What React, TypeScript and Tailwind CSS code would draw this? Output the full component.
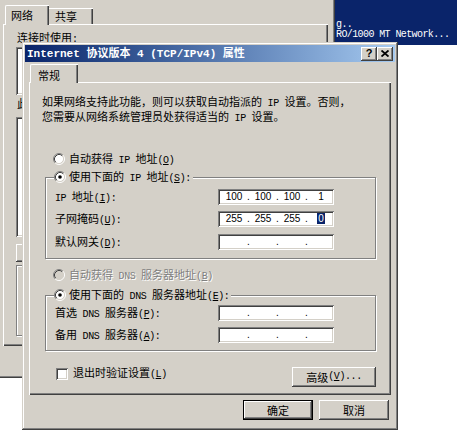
import React from 'react';

// classic win 2000/2003 bevels
const RAISED = 'shadow-[inset_-1px_-1px_#404040,inset_1px_1px_#ffffff,inset_-2px_-2px_#808080,inset_2px_2px_#d4d0c8]';
const SUNKEN = 'shadow-[inset_1px_1px_#808080,inset_-1px_-1px_#ffffff,inset_2px_2px_#404040,inset_-2px_-2px_#d4d0c8]';
const WINDOW = 'shadow-[inset_-1px_-1px_#404040,inset_1px_1px_#d4d0c8,inset_-2px_-2px_#808080,inset_2px_2px_#ffffff]';
const PANEL = 'shadow-[inset_1px_1px_#ffffff,inset_-1px_-1px_#404040,inset_-2px_-2px_#808080]';
const FRAME = 'border border-[#808080] shadow-[inset_1px_1px_#ffffff,1px_1px_#ffffff]';

const CJK = /([\u2E80-\u9FFF\u3000-\u303F\uFF00-\uFFEF]+)/;
const LATIN = "font-['Liberation_Mono'] text-[10px] tracking-[-0.4px]";

const Mn = ({ s }: { s: string }) => (
    <>{s.split(/&(.)/).map((p, i) => (i % 2 ? <u key={i}>{p}</u> : p))}</>
);

// splits a label into CJK runs and half-width runs, like SimSun would draw it
const T = ({ s, latin = LATIN }: { s: string; latin?: string }) => (
    <>
        {s.split(CJK).filter(Boolean).map((p, i) =>
            CJK.test(p)
                ? <span key={i} className="font-['Noto_Sans_CJK_SC']">{p}</span>
                : <span key={i} className={latin}><Mn s={p} /></span>
        )}
    </>
);

const Radio = ({ on = false, disabled = false }: { on?: boolean; disabled?: boolean }) => (
    <svg width="12" height="12" viewBox="0 0 12 12" className="shrink-0">
        <circle cx="6" cy="6" r="4.5" fill={disabled ? '#d4d0c8' : '#ffffff'} />
        <path d="M2.11 9.89A5.5 5.5 0 0 1 9.89 2.11" fill="none" stroke="#808080" />
        <path d="M9.89 2.11A5.5 5.5 0 0 1 2.11 9.89" fill="none" stroke="#ffffff" />
        <path d="M2.82 9.18A4.5 4.5 0 0 1 9.18 2.82" fill="none" stroke="#404040" />
        <path d="M9.18 2.82A4.5 4.5 0 0 1 2.82 9.18" fill="none" stroke="#d4d0c8" />
        {on && <circle cx="6" cy="6" r="1.8" fill="#000000" />}
    </svg>
);

const IpBox = ({ v = ['', '', '', ''], sel = -1 }: { v?: string[]; sel?: number }) => (
    <div className={`w-[116px] h-[16px] bg-white ${SUNKEN} flex items-center pl-[4px] font-['Liberation_Sans'] text-[10px] leading-[12px]`}>
        {v.map((x, i) => (
            <React.Fragment key={i}>
                {i > 0 && <span className="w-[5px] text-center">.</span>}
                <span className="w-[24px] text-center">
                    {i === sel ? <span className="bg-[#0a246a] text-white px-px">{x}</span> : x}
                </span>
            </React.Fragment>
        ))}
    </div>
);

const Row = ({ label, children }: { label: string; children: React.ReactNode }) => (
    <div className="flex items-center h-[16px]">
        <div className="w-[163px] whitespace-pre leading-[12px]"><T s={label} /></div>
        {children}
    </div>
);

const Btn = ({ label, def = false, w }: { label: string; def?: boolean; w: string }) => (
    <div className={`${w} h-[20px] flex items-center justify-center whitespace-pre leading-[12px] ${def ? 'border border-black ' + RAISED : RAISED}`}>
        <T s={label} />
    </div>
);

const Background = () => (
    <>
        <div className="absolute left-[335px] top-0 w-[122px] h-[45px] bg-[#0a246a] text-white font-['Liberation_Mono'] text-[10px] tracking-[-0.6px] leading-[10px] pl-[1px] pt-[20px] whitespace-pre">
            <div>g..</div>
            <div>RO/1000 MT Network...</div>
        </div>
        <div className="absolute left-0 top-0 w-[335px] h-[378px] bg-[#d4d0c8] pl-[3px] pt-[5px] shadow-[inset_-1px_-1px_#404040,inset_-2px_-2px_#808080]">
            <div className="flex items-end h-[19px] pl-[2px] relative z-10">
                <div className="w-[44px] h-[20px] -mb-px bg-[#d4d0c8] border-l border-t border-white rounded-tl-[2px] shadow-[inset_-1px_0_#404040,inset_-2px_0_#808080] pl-[5px] pt-[3px] leading-[12px]">
                    <T s="网络" />
                </div>
                <div className="w-[44px] h-[16px] bg-[#d4d0c8] border-t border-white shadow-[inset_-1px_0_#404040,inset_-2px_0_#808080] pl-[6px] pt-[1px] leading-[12px]">
                    <T s="共享" />
                </div>
            </div>
            <div className={`w-[325px] h-[322px] ${PANEL} pl-[13px] pt-[7px]`}>
                <div className="h-[12px] leading-[12px] pl-px whitespace-pre"><T s="连接时使用:" /></div>
                <div className={`mt-[4px] w-[300px] h-[48px] bg-white ${SUNKEN}`} />
                {/* only the first glyph of this label peeks out from under the dialog */}
                <div className="mt-[2px] h-[12px] leading-[12px] pl-px"><T s="此" /></div>
                <div className={`mt-[8px] w-[300px] h-[120px] bg-white ${SUNKEN}`} />
                <div className={`mt-[7px] w-[70px] h-[18px] ${RAISED}`} />
                <div className={`mt-[3px] w-[300px] h-[71px] ${FRAME}`} />
            </div>
        </div>
    </>
);

export default function App() {
    return (
        <div className="relative w-[457px] h-[437px] overflow-hidden bg-white text-black text-[11px] font-['Noto_Sans_CJK_SC',sans-serif]">
            <Background />

            <div className={`absolute left-[22px] top-[42px] w-[376px] h-[388px] bg-[#d4d0c8] p-[3px] flex flex-col ${WINDOW}`}>
                {/* title bar */}
                <div className="h-[17px] flex items-center pl-[2px] pr-[2px] bg-linear-to-r from-[#0a246a] to-[#a6caf0]">
                    <div className="flex-1 text-white font-bold whitespace-pre leading-[13px]">
                        <T s="Internet 协议版本 4 (TCP/IPv4) 属性" latin="font-['Liberation_Mono'] text-[11px] font-bold" />
                    </div>
                    <div className={`w-[16px] h-[14px] bg-[#d4d0c8] ${RAISED} flex items-center justify-center font-['Liberation_Sans'] font-bold text-[11px] leading-[11px]`}>?</div>
                    <div className={`w-[16px] h-[14px] bg-[#d4d0c8] ${RAISED} flex items-center justify-center`}>
                        <svg width="8" height="7" viewBox="0 0 8 7">
                            <path d="M0.5 0.5L7.5 6.5M7.5 0.5L0.5 6.5" stroke="#000" strokeWidth="1.8" />
                        </svg>
                    </div>
                </div>

                <div className="flex-1 flex flex-col px-[4px] pt-[2px]">
                    <div className="flex items-end h-[18px] pl-px relative z-10">
                        <div className="w-[48px] h-[19px] -mb-px bg-[#d4d0c8] border-l border-t border-white rounded-tl-[2px] shadow-[inset_-1px_0_#404040,inset_-2px_0_#808080] pl-[7px] pt-[4px] leading-[12px]">
                            <T s="常规" />
                        </div>
                    </div>

                    <div className={`h-[313px] ${PANEL} flex flex-col`}>
                        <div className="pl-[13px] pt-[13px] leading-[13px] whitespace-pre">
                            <div><T s="如果网络支持此功能，则可以获取自动指派的 IP 设置。否则，" /></div>
                            <div><T s="您需要从网络系统管理员处获得适当的 IP 设置。" /></div>
                        </div>

                        <div className="mt-[27px] pl-[24px] h-[14px] flex items-center gap-[4px] whitespace-pre leading-[12px]">
                            <Radio />
                            <span><T s="自动获得 IP 地址(&O)" /></span>
                        </div>

                        <div className={`relative mt-[11px] ml-[16px] w-[331px] ${FRAME} pt-[11px] pb-[8px] pl-[9px]`}>
                            <div className="absolute left-[8px] top-[-8px] h-[14px] bg-[#d4d0c8] flex items-center gap-[3px] pr-[2px] whitespace-pre leading-[12px]">
                                <Radio on />
                                <span><T s="使用下面的 IP 地址(&S):" /></span>
                            </div>
                            <Row label="IP 地址(&I):"><IpBox v={['100', '100', '100', '1']} /></Row>
                            <div className="mt-[6px]"><Row label="子网掩码(&U):"><IpBox v={['255', '255', '255', '0']} sel={3} /></Row></div>
                            <div className="mt-[7px]"><Row label="默认网关(&D):"><IpBox /></Row></div>
                        </div>

                        <div className="mt-[9px] pl-[24px] h-[14px] flex items-center gap-[4px] whitespace-pre leading-[12px] text-[#808080] [text-shadow:1px_1px_#ffffff]">
                            <Radio disabled />
                            <span><T s="自动获得 DNS 服务器地址(&B)" /></span>
                        </div>

                        <div className={`relative mt-[13px] ml-[16px] w-[331px] ${FRAME} pt-[9px] pb-[7px] pl-[9px]`}>
                            <div className="absolute left-[8px] top-[-8px] h-[14px] bg-[#d4d0c8] flex items-center gap-[3px] pr-[2px] whitespace-pre leading-[12px]">
                                <Radio on />
                                <span><T s="使用下面的 DNS 服务器地址(&E):" /></span>
                            </div>
                            <Row label="首选 DNS 服务器(&P):"><IpBox /></Row>
                            <div className="mt-[6px]"><Row label="备用 DNS 服务器(&A):"><IpBox /></Row></div>
                        </div>

                        <div className="mt-[14px] flex items-start pl-[27px] pr-[15px]">
                            <div className="mt-px flex items-center gap-[5px] whitespace-pre leading-[12px]">
                                <div className={`w-[12px] h-[12px] bg-white ${SUNKEN}`} />
                                <span><T s="退出时验证设置(&L)" /></span>
                            </div>
                            <div className="ml-auto mt-[2px]"><Btn label="高级(&V)..." w="w-[84px]" /></div>
                        </div>
                    </div>

                    <div className="mt-[5px] flex justify-end gap-[6px] pr-[2px]">
                        <Btn label="确定" def w="w-[70px]" />
                        <Btn label="取消" w="w-[70px]" />
                    </div>
                </div>
            </div>
        </div>
    );
}
